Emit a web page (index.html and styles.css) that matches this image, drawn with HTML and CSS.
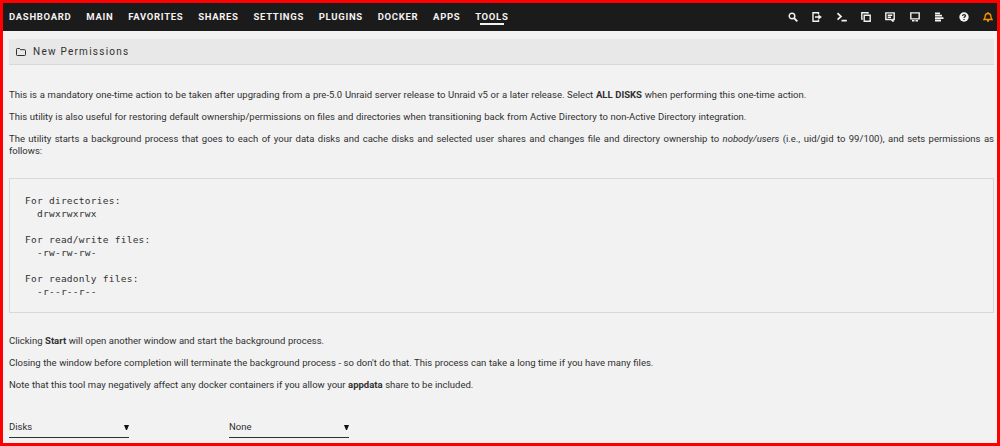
FILE: index.html
```html
<!DOCTYPE html>
<html lang="en">
<head>
    <meta charset="UTF-8">
    <meta name="viewport" content="width=device-width, initial-scale=1.0">
    <title>New Permissions</title>
    <link rel="stylesheet" href="styles.css">
</head>
<body>
    <div class="page">
        <div class="navbar">
            <div class="menu">
                <a>DASHBOARD</a>
                <a>MAIN</a>
                <a>FAVORITES</a>
                <a>SHARES</a>
                <a>SETTINGS</a>
                <a>PLUGINS</a>
                <a>DOCKER</a>
                <a>APPS</a>
                <a class="active">TOOLS</a>
            </div>
            <div class="icons">
                <svg viewBox="0 0 10 10"><circle cx="4" cy="4" r="2.8"/><path d="M6 6l3.3 3.3" stroke-width="1.8"/></svg>
                <svg viewBox="0 0 10 10"><path d="M6.5 2.2V.8H1v8.4h5.5V7.8M3 5h4"/><path class="solid" d="M6.3 2.2L9.9 5 6.3 7.8z"/></svg>
                <svg viewBox="0 0 10 10"><path d="M.5 1.2L4 4.4.5 7.6M4.5 8.7h5.3" stroke-width="1.7"/></svg>
                <svg viewBox="0 0 10 10"><path d="M3.2 3.2h6v6h-6zM1.8 7H.8V.8H7v1"/></svg>
                <svg viewBox="0 0 10 10"><path d="M.8.9h8.4v6.6H8v1.7L6 7.5H.8zM2.7 3.2h4.6M2.7 5.2h3.3"/></svg>
                <svg viewBox="0 0 10 10"><path d="M.8.9h8.4v6H.8zM2 8.8h2.5M5.5 8.8H8"/></svg>
                <svg viewBox="0 0 10 10"><path d="M1 1.3h5M1 3.7h7M1 6.1h8.5M1 8.5h6" stroke-width="1.8"/></svg>
                <svg viewBox="0 0 10 10"><circle class="solid" cx="5" cy="5" r="4.7"/><path class="mark" d="M3.6 3.9c0-1.9 2.9-1.7 2.9-.1C6.5 4.8 5 4.7 5 6M5 7v1"/></svg>
                <svg class="bell" viewBox="0 0 10 10"><path d="M5 0v1.2M1 7.5h8C8 6.5 8 5.5 7.8 4 7.5.6 2.5.6 2.2 4 2 5.5 2 6.5 1 7.5zM4 9h2"/></svg>
            </div>
        </div>

        <div class="content">
            <div class="title">
                <svg viewBox="0 0 10 8"><path d="M.5 1.3q0-.8.8-.8h2.2l1 1.2h4.2q.8 0 .8.8v4.2q0 .8-.8.8H1.3q-.8 0-.8-.8z"/></svg>
                <span>New Permissions</span>
            </div>

            <div class="intro">
                <p>This is a mandatory one-time action to be taken after upgrading from a pre-5.0 Unraid server release to Unraid v5 or a later release. Select <b>ALL DISKS</b> when performing this one-time action.</p>
                <p>This utility is also useful for restoring default ownership/permissions on files and directories when transitioning back from Active Directory to non-Active Directory integration.</p>
                <p>The utility starts a background process that goes to each of your data disks and cache disks and selected user shares and changes file and directory ownership to <i>nobody/users</i> (i.e., uid/gid to 99/100), and sets permissions as follows:</p>
            </div>

<pre class="code">For directories:
  drwxrwxrwx

For read/write files:
  -rw-rw-rw-

For readonly files:
  -r--r--r--</pre>

            <div class="notes">
                <p>Clicking <b>Start</b> will open another window and start the background process.</p>
                <p>Closing the window before completion will terminate the background process - so don't do that. This process can take a long time if you have many files.</p>
                <p>Note that this tool may negatively affect any docker containers if you allow your <b>appdata</b> share to be included.</p>
            </div>

            <div class="selects">
                <div class="select"><span>Disks</span><i class="arrow"></i></div>
                <div class="select"><span>None</span><i class="arrow"></i></div>
            </div>
        </div>
    </div>
</body>
</html>
```
FILE: styles.css
```css
* {
    box-sizing: border-box;
}

body {
    margin: 0;
    font-family: Roboto, sans-serif;
    font-size: 9.5px;
    line-height: 12px;
    color: #303030;
    background: #f2f2f2;
}

.page {
    height: 446px;
    border: 3px solid #ff0000;
    overflow: hidden;
}

.navbar {
    height: 28px;
    padding: 0 4px 0 6px;
    display: flex;
    justify-content: space-between;
    align-items: center;
    background: #1c1b1b;
}

.menu {
    display: flex;
    gap: 14.8px;
}

.menu a {
    color: #f2f2f2;
    font-size: 9.5px;
    font-weight: bold;
    letter-spacing: 0.7px;
}

.active {
    position: relative;
}

.active::after {
    content: "";
    position: absolute;
    left: 5px;
    right: 5px;
    bottom: -2px;
    height: 2px;
    background: #f2f2f2;
}

.icons {
    display: flex;
    gap: 14.4px;
}

.icons svg {
    width: 10px;
    height: 10px;
    fill: none;
    stroke: #f2f2f2;
    stroke-width: 1.4;
}

.icons .solid {
    fill: #f2f2f2;
    stroke: none;
}

.icons .mark {
    stroke: #1c1b1b;
    stroke-width: 1.2;
}

.icons .bell {
    stroke: #f59000;
}

.content {
    padding: 8px 3px 0 6px;
}

.title {
    height: 26px;
    padding-left: 7px;
    display: flex;
    align-items: center;
    gap: 7px;
    font-size: 10px;
    letter-spacing: 1.25px;
    background: #e8e8e8;
    border-bottom: 1px solid #d8d8d8;
}

.title svg {
    width: 10px;
    height: 8px;
    fill: none;
    stroke: #303030;
}

p {
    margin: 0 0 10px;
    text-align: justify;
    word-spacing: 0.33px;
}

.intro {
    padding-top: 24px;
}

.code {
    height: 135px;
    margin: 21px 0 0;
    padding: 15px;
    border: 1px solid #d8d8d8;
    font-family: 'DejaVu Sans Mono', monospace;
    font-size: 9.5px;
    letter-spacing: 0.26px;
    line-height: 13px;
}

.notes {
    padding-top: 22px;
}

.notes p {
    word-spacing: 0.18px;
}

.selects {
    margin-top: 28px;
    display: flex;
    gap: 100px;
}

.select {
    width: 120px;
    height: 19px;
    padding-top: 2px;
    display: flex;
    justify-content: space-between;
    border-bottom: 1px solid #303030;
}

.arrow {
    width: 5px;
    height: 5px;
    margin-top: 4px;
    background: #111;
    clip-path: polygon(0 0, 100% 0, 60% 100%, 40% 100%);
}
```
